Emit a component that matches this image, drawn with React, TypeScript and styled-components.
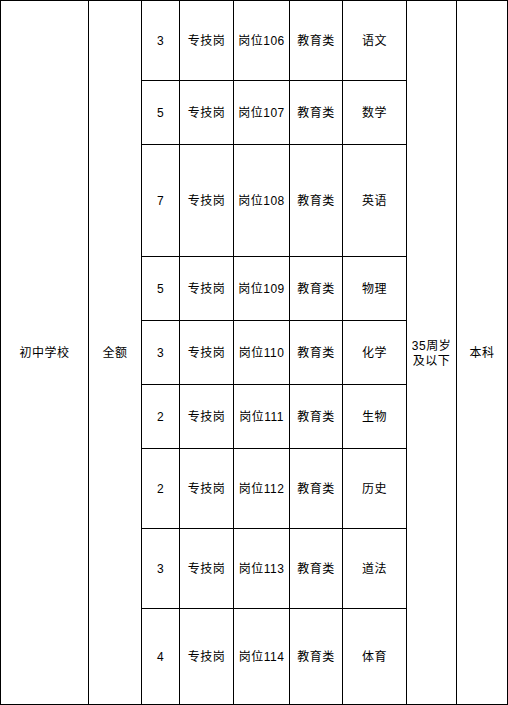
import React from 'react'
import styled, { createGlobalStyle } from 'styled-components'

const GlobalStyle = createGlobalStyle`
  html, body {
    margin: 0;
    padding: 0;
    background: #fff;
  }
  body {
    font-family: 'Liberation Sans', 'Noto Sans CJK SC', sans-serif;
    font-size: 12px;
    color: #000;
  }
`

const Sheet = styled.div`
  display: grid;
  grid-template-columns: 87px 52px 37px 53px 55px 52px 63px 49px 50px;
  grid-template-rows: 79px 63px 111px 63px 63px 63px 79px 79px 95px;
  gap: 1px;
  padding: 1px;
  width: 508px;
  box-sizing: border-box;
  background: #000;
`

// $col pins a cell that spans the whole height to its column
const Cell = styled.div<{ $col?: number }>`
  background: #fff;
  display: flex;
  align-items: center;
  justify-content: center;
  padding-top: 2px;
  text-align: center;
  line-height: 15px;
  letter-spacing: 0.5px;
  white-space: nowrap;
  ${(p) => (p.$col ? `grid-column: ${p.$col}; grid-row: 1 / span 9;` : '')}
`

const rows = [
  { count: 3, post: '岗位106', subject: '语文' },
  { count: 5, post: '岗位107', subject: '数学' },
  { count: 7, post: '岗位108', subject: '英语' },
  { count: 5, post: '岗位109', subject: '物理' },
  { count: 3, post: '岗位110', subject: '化学' },
  { count: 2, post: '岗位111', subject: '生物' },
  { count: 2, post: '岗位112', subject: '历史' },
  { count: 3, post: '岗位113', subject: '道法' },
  { count: 4, post: '岗位114', subject: '体育' },
]

export default function App() {
  return (
    <>
      <GlobalStyle />
      <Sheet>
        <Cell $col={1}>初中学校</Cell>
        <Cell $col={2}>全额</Cell>
        <Cell $col={8}>
          35周岁
          <br />
          及以下
        </Cell>
        <Cell $col={9}>本科</Cell>
        {rows.map((r) => (
          <React.Fragment key={r.post}>
            <Cell>{r.count}</Cell>
            <Cell>专技岗</Cell>
            <Cell>{r.post}</Cell>
            <Cell>教育类</Cell>
            <Cell>{r.subject}</Cell>
          </React.Fragment>
        ))}
      </Sheet>
    </>
  )
}
